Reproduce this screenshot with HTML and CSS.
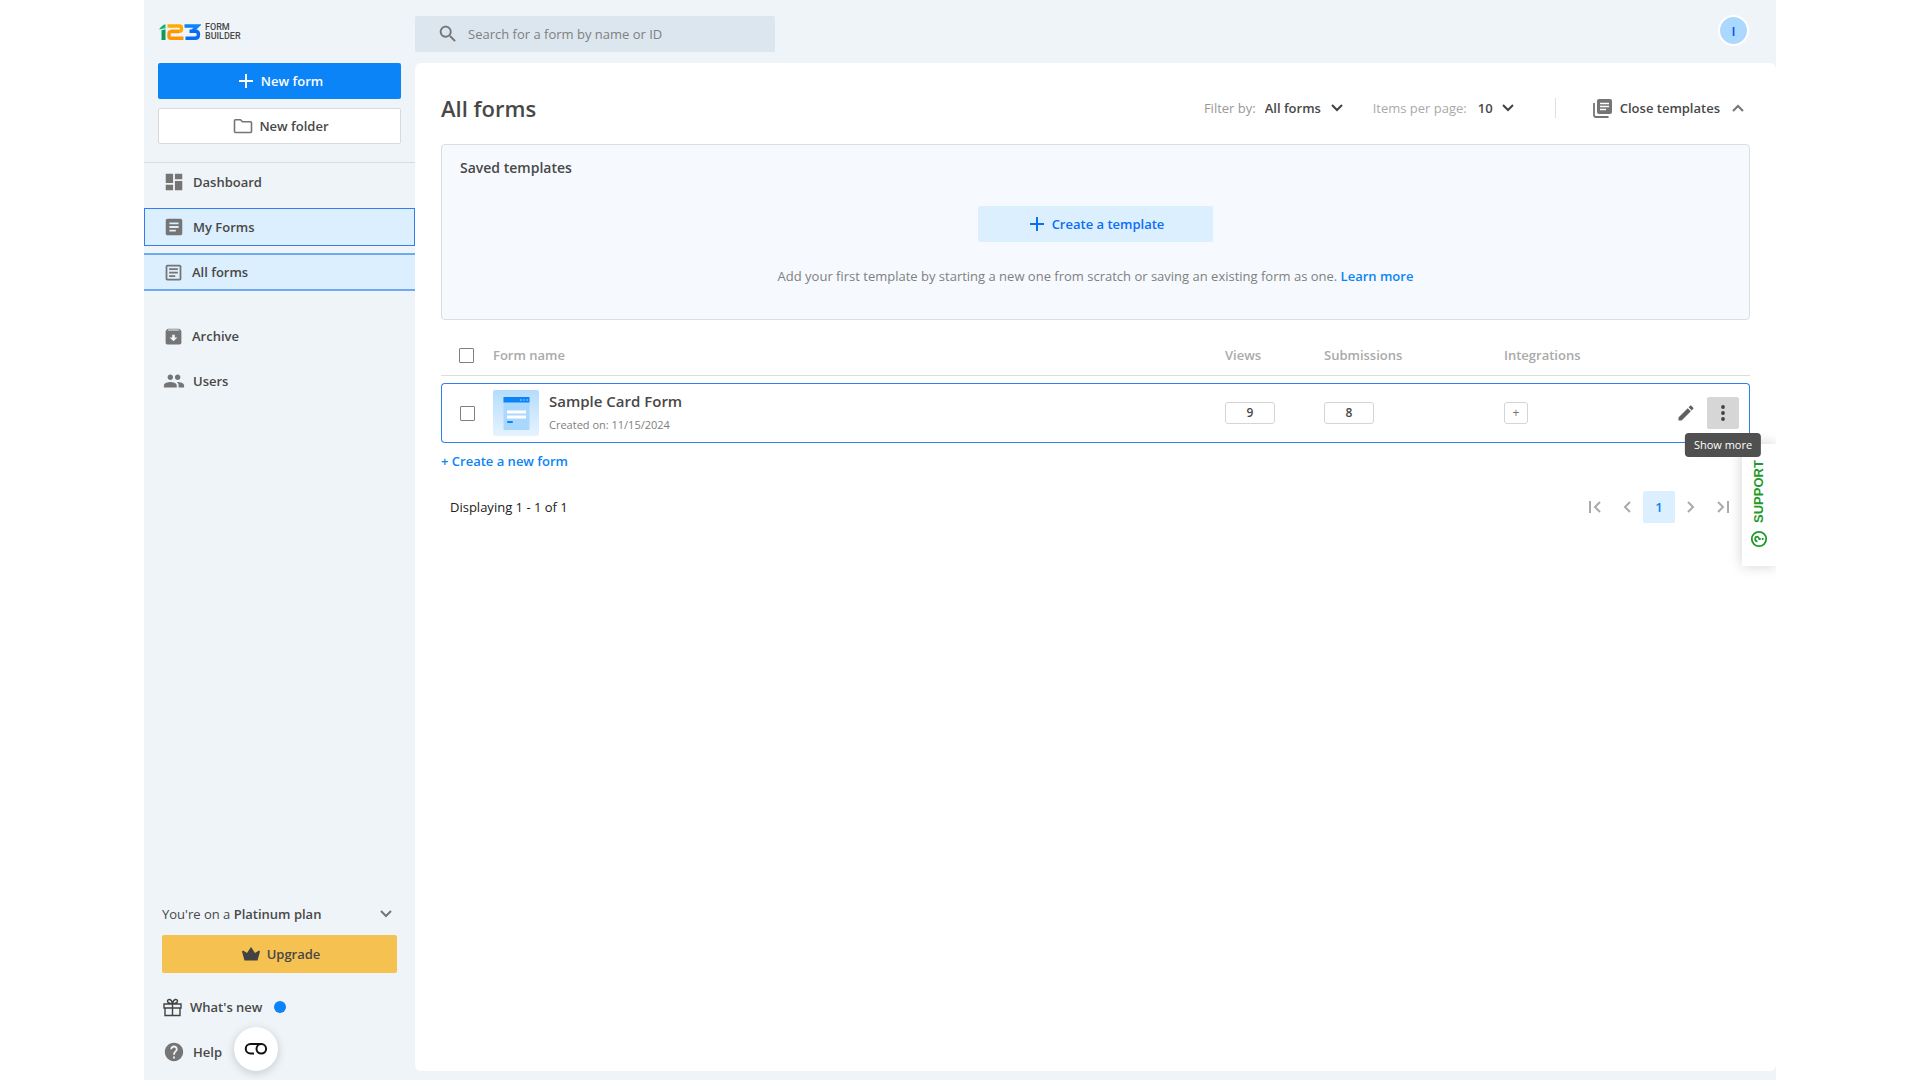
FILE: index.html
```html
<!DOCTYPE html>
<html lang="en">
<head>
    <meta charset="UTF-8">
    <meta name="viewport" content="width=device-width, initial-scale=1.0">
    <title>All forms - 123FormBuilder</title>
    <link rel="stylesheet" href="styles.css">
</head>
<body>
    <div class="app">
        <!-- Sidebar -->
        <aside class="sidebar">
            <a href="#" class="logo">
                <svg width="42" height="16" viewBox="0 0 42 16" fill="none">
                    <path d="M0 5.500C2 2.500 4 .8 6.500.3V4.200C4.500 4.400 2.500 5 0 5.500Z" fill="#12b76f"/>
                    <path d="M2.500 6.200L6.500 5.200V16H2.500Z" fill="#0f9a5c"/>
                    <path d="M8.500 2H20.500Q22.500 2 22.500 4V5Q22.500 7.200 20.500 7.200H11.500" stroke="#ffab00" stroke-width="3.400"/>
                    <path d="M20 7.600H12Q10 7.600 10 9.600V12.500Q10 14.300 12 14.300H24.500" stroke="#ff9500" stroke-width="3.400"/>
                    <path d="M25.500 2H38.500L33.500 7" stroke="#0b84f7" stroke-width="3.400"/>
                    <path d="M30.500 7.200H36.500Q39.500 7.200 39.500 10.500Q39.500 14.300 36 14.300H26.500" stroke="#0a6cf5" stroke-width="3.400"/>
                </svg>
                <span class="logo-text">FORM<br>BUILDER</span>
            </a>

            <div class="create-buttons">
                <button class="btn btn-primary">
                    <svg width="14" height="14" viewBox="0 0 14 14" stroke="currentColor" stroke-width="2"><path d="M7 0V14M0 7H14"/></svg>
                    New form
                </button>
                <button class="btn btn-outline">
                    <svg width="20" height="16" viewBox="0 0 20 16" fill="none" stroke="#757575" stroke-width="1.600"><path d="M2.500 1.800H7.500L9.500 3.800H17.500Q18.500 3.800 18.500 4.800V13.500Q18.500 14.500 17.500 14.500H2.500Q1.500 14.500 1.500 13.500V2.800Q1.500 1.800 2.500 1.800Z"/></svg>
                    New folder
                </button>
            </div>

            <nav class="menu">
                <a href="#" class="menu-item">
                    <svg width="22" height="22" viewBox="0 0 24 24"><path d="M3 13h8V3H3v10zm0 8h8v-6H3v6zm10 0h8V11h-8v10zm0-18v6h8V3h-8z"/></svg>
                    Dashboard
                </a>
                <a href="#" class="menu-item focused">
                    <svg width="22" height="22" viewBox="0 0 24 24"><path d="M19 3H5c-1.100 0-2 .9-2 2v14c0 1.100.9 2 2 2h14c1.100 0 2-.9 2-2V5c0-1.100-.9-2-2-2zm-5 14H7v-2h7v2zm3-4H7v-2h10v2zm0-4H7V7h10v2z"/></svg>
                    My Forms
                </a>
                <a href="#" class="menu-item selected">
                    <svg width="21" height="21" viewBox="0 0 24 24"><path d="M19 5v14H5V5h14m0-2H5c-1.100 0-2 .9-2 2v14c0 1.100.9 2 2 2h14c1.100 0 2-.9 2-2V5c0-1.100-.9-2-2-2zm-5 14H7v-2h7v2zm3-4H7v-2h10v2zm0-4H7V7h10v2z"/></svg>
                    All forms
                </a>
            </nav>
            <nav class="menu menu-second">
                <a href="#" class="menu-item">
                    <svg width="21" height="21" viewBox="0 0 24 24"><path d="M20.540 5.230l-1.390-1.680C18.880 3.210 18.470 3 18 3H6c-.47 0-.88.21-1.160.55L3.460 5.230C3.170 5.570 3 6.020 3 6.500V19c0 1.100.9 2 2 2h14c1.100 0 2-.9 2-2V6.500c0-.48-.17-.93-.46-1.270zM12 17.500L7.500 13H10.500v-3h3v3h3L12 17.500zM5.120 5l.81-1h12l.94 1H5.120z"/></svg>
                    Archive
                </a>
                <a href="#" class="menu-item">
                    <svg width="22" height="22" viewBox="0 0 24 24"><path d="M16 11c1.660 0 2.990-1.340 2.990-3S17.660 5 16 5s-3 1.340-3 3 1.340 3 3 3zm-8 0c1.660 0 2.990-1.340 2.990-3S9.660 5 8 5 5 6.340 5 8s1.340 3 3 3zm0 2c-2.330 0-7 1.170-7 3.500V19h14v-2.500c0-2.330-4.670-3.500-7-3.500zm8 0c-.29 0-.62.02-.97.05 1.160.84 1.970 1.970 1.970 3.450V19h6v-2.500c0-2.330-4.670-3.500-7-3.500z"/></svg>
                    Users
                </a>
            </nav>

            <div class="plan">
                <button class="plan-toggle">
                    <span>You're on a <strong>Platinum plan</strong></span>
                    <svg width="12" height="8" viewBox="0 0 12 8" fill="none" stroke="#757575" stroke-width="2"><path d="M1 1L6 6L11 1"/></svg>
                </button>
                <button class="btn btn-upgrade">
                    <svg width="18" height="14" viewBox="0 0 18 14" fill="#424242"><path d="M2.500 13.500L0 4.500L1 3.500L5 6L9 0L13 6L17 3.500L18 4.500L15.500 13.500Z"/></svg>
                    Upgrade
                </button>
            </div>
            <nav class="menu">
                <a href="#" class="menu-item">
                    <svg class="gift" width="19" height="19" viewBox="0 0 19 19" fill="none" stroke="#424242" stroke-width="1.400"><path d="M1 6H18V10H1ZM2 10V17.500H17V10M9.500 6V17.500M9.500 5.500C7 5.500 4.500 5 4.500 3C4.500 1 8.500.2 9.500 5.500C10.500.2 14.500 1 14.500 3C14.500 5 12 5.500 9.500 5.500Z"/></svg>
                    What's new
                    <span class="dot"></span>
                </a>
                <a href="#" class="menu-item">
                    <svg width="22" height="22" viewBox="0 0 24 24"><path d="M12 2C6.480 2 2 6.480 2 12s4.480 10 10 10 10-4.480 10-10S17.520 2 12 2zm1 17h-2v-2h2v2zm2.070-7.750l-.9.920C13.450 12.900 13 13.500 13 15h-2v-.5c0-1.100.45-2.100 1.170-2.830l1.240-1.260c.37-.36.59-.86.59-1.410 0-1.100-.9-2-2-2s-2 .9-2 2H8c0-2.210 1.790-4 4-4s4 1.790 4 4c0 .88-.36 1.680-.93 2.250z"/></svg>
                    Help
                </a>
            </nav>
            <button class="cookie-button" aria-label="Cookie settings">
                <svg width="24" height="14" viewBox="0 0 24 14" fill="none" stroke="#111" stroke-width="2"><path d="M10 11.500H6.500A4.700 4.700 0 0 1 6.500 2H17"/><circle cx="17.300" cy="6.800" r="4.800"/></svg>
            </button>
        </aside>

        <div class="content">
            <header class="topbar">
                <label class="search">
                    <svg width="22" height="22" viewBox="0 0 24 24" fill="#757575"><path d="M15.500 14h-.79l-.28-.27C15.410 12.590 16 11.110 16 9.500 16 5.910 13.090 3 9.500 3S3 5.910 3 9.500 5.910 16 9.500 16c1.610 0 3.090-.59 4.230-1.570l.27.28v.79l5 4.990L20.490 19l-4.990-5zm-6 0C7.010 14 5 11.990 5 9.500S7.010 5 9.500 5 14 7.010 14 9.500 11.990 14 9.500 14z"/></svg>
                    <input type="text" placeholder="Search for a form by name or ID" aria-label="Search for a form by name or ID">
                </label>
                <button class="avatar">I</button>
            </header>

            <main class="panel">
                <div class="toolbar">
                    <h1>All forms</h1>
                    <div class="filters">
                        <label class="filter" for="filter">Filter by:</label>
                        <span class="select-wrap">
                            <select id="filter"><option>All forms</option></select>
                            <svg width="12" height="8" viewBox="0 0 12 8" fill="none" stroke="#424242" stroke-width="2"><path d="M1 1L6 6L11 1"/></svg>
                        </span>
                        <label class="filter items" for="per-page">Items per page:</label>
                        <span class="select-wrap">
                            <select id="per-page"><option>10</option></select>
                            <svg width="12" height="8" viewBox="0 0 12 8" fill="none" stroke="#424242" stroke-width="2"><path d="M1 1L6 6L11 1"/></svg>
                        </span>
                    </div>
                    <button class="close-templates">
                        <svg width="19" height="19" viewBox="0 0 19 19"><path d="M6 0H17Q19 0 19 2V13Q19 15 17 15H6Q4 15 4 13V2Q4 0 6 0Z" fill="#757575"/><path d="M1 4V16Q1 18 3 18H15.500" fill="none" stroke="#757575" stroke-width="1.800"/><path d="M7 4.500H16M7 7.500H16M7 10.500H13" stroke="#fff" stroke-width="1.500"/></svg>
                        Close templates
                        <svg class="chevron-up" width="12" height="8" viewBox="0 0 12 8" fill="none" stroke="#757575" stroke-width="2"><path d="M1 7L6 2L11 7"/></svg>
                    </button>
                </div>

                <section class="templates">
                    <h2>Saved templates</h2>
                    <button class="btn btn-template">
                        <svg width="14" height="14" viewBox="0 0 14 14" stroke="currentColor" stroke-width="2"><path d="M7 0V14M0 7H14"/></svg>
                        Create a template
                    </button>
                    <p>Add your first template by starting a new one from scratch or saving an existing form as one. <a href="#">Learn more</a></p>
                </section>

                <table class="forms">
                    <thead>
                        <tr>
                            <th class="col-check"><input type="checkbox" aria-label="Select all forms"></th>
                            <th>Form name</th>
                            <th class="col-views">Views</th>
                            <th class="col-submissions">Submissions</th>
                            <th class="col-integrations">Integrations</th>
                            <th class="col-actions"></th>
                        </tr>
                    </thead>
                    <tbody>
                        <tr>
                            <td><input type="checkbox" aria-label="Select Sample Card Form"></td>
                            <td>
                                <div class="form-cell">
                                    <svg class="thumb" width="46" height="46" viewBox="0 0 46 46">
                                        <defs>
                                            <linearGradient id="thumb-bg" x1="0" y1="0" x2="0" y2="1">
                                                <stop offset="0" stop-color="#b5dcfd"/>
                                                <stop offset="1" stop-color="#e6f3fe"/>
                                            </linearGradient>
                                        </defs>
                                        <rect width="46" height="46" rx="2" fill="url(#thumb-bg)"/>
                                        <path d="M10.500 7H36.500V39Q36.500 40 35.500 40H11.500Q10.500 40 10.500 39Z" fill="#aad7fd"/>
                                        <path d="M10.500 7H36.500V12.500H10.500Z" fill="#0b84f7"/>
                                        <path d="M27 10H29M30.500 10H32M33.500 10H35" stroke="#aad7fd"/>
                                        <path d="M14 20.500H33V23.500H14ZM14 25.500H33V28.500H14Z" fill="#fff"/>
                                        <rect x="14" y="31" width="6" height="2" rx="1" fill="#0b84f7"/>
                                    </svg>
                                    <div>
                                        <div class="form-name">Sample Card Form</div>
                                        <div class="form-date">Created on: 11/15/2024</div>
                                    </div>
                                </div>
                            </td>
                            <td><a href="#" class="count">9</a></td>
                            <td><a href="#" class="count">8</a></td>
                            <td><button class="add-integration" aria-label="Add integration">+</button></td>
                            <td>
                                <div class="actions">
                                    <button class="icon-button" aria-label="Edit">
                                        <svg width="20" height="20" viewBox="0 0 24 24" fill="#616161"><path d="M3 17.250V21h3.750L17.810 9.940l-3.750-3.750L3 17.250zM20.710 7.040c.39-.39.39-1.020 0-1.410l-2.340-2.340c-.39-.39-1.020-.39-1.410 0l-1.830 1.830 3.750 3.750 1.830-1.830z"/></svg>
                                    </button>
                                    <button class="icon-button more" aria-label="Show more">
                                        <svg width="4" height="16" viewBox="0 0 4 16" fill="#424242"><circle cx="2" cy="2" r="1.900"/><circle cx="2" cy="8" r="1.900"/><circle cx="2" cy="14" r="1.900"/></svg>
                                        <span class="tooltip">Show more</span>
                                    </button>
                                </div>
                            </td>
                        </tr>
                    </tbody>
                </table>
                <a href="#" class="create-link">+ Create a new form</a>

                <div class="pager">
                    <span>Displaying 1 - 1 of 1</span>
                    <div class="pages">
                        <button aria-label="First page"><svg width="12" height="12" viewBox="0 0 12 12"><path d="M1 0V12M11 1L6 6L11 11"/></svg></button>
                        <button aria-label="Previous page"><svg width="8" height="12" viewBox="0 0 8 12"><path d="M7 1L2 6L7 11"/></svg></button>
                        <button class="current">1</button>
                        <button aria-label="Next page"><svg width="8" height="12" viewBox="0 0 8 12"><path d="M1 1L6 6L1 11"/></svg></button>
                        <button aria-label="Last page"><svg width="12" height="12" viewBox="0 0 12 12"><path d="M1 1L6 6L1 11M11 0V12"/></svg></button>
                    </div>
                </div>
            </main>
        </div>

        <button class="support">
            <svg width="18" height="18" viewBox="0 0 18 18" fill="none" stroke="#1f9a28" stroke-width="1.800"><circle cx="9" cy="9" r="7.200"/><path d="M6.700 7.500Q6.700 5.200 9 5.200Q11.300 5.200 11.300 7.200Q11.300 8.500 9 9.300V10.700M9 11.800V13.500"/></svg>
            SUPPORT
        </button>
    </div>
</body>
</html>
```
FILE: styles.css
```css
* {
    box-sizing: border-box;
}
body {
    margin: 0;
    background: #fff;
    font-family: 'Open Sans', 'Noto Sans', sans-serif;
    font-size: 13px;
    line-height: 20px;
    color: #484848;
}
button, input, select {
    font: inherit;
    color: inherit;
}
button {
    border: none;
    background: none;
    padding: 0;
    cursor: pointer;
}
a {
    color: #0b84f7;
    text-decoration: none;
    font-weight: 600;
}
.app {
    position: relative;
    display: flex;
    width: 85%;
    min-height: 100vh;
    margin: 0 auto;
    background: #eff4f9;
    overflow: hidden;
}

/* Sidebar */
.sidebar {
    position: relative;
    display: flex;
    flex-direction: column;
    flex: 0 0 271px;
    padding-bottom: 9px;
}
.logo {
    display: flex;
    align-items: center;
    gap: 4px;
    height: 63px;
    padding-left: 15px;
}
.logo-text {
    font: 500 9px/9px Roboto, sans-serif;
    color: #484848;
}
.create-buttons {
    display: flex;
    flex-direction: column;
    gap: 9px;
    padding: 0 14px 18px;
    border-bottom: 1px solid #d9dde1;
}
.btn {
    display: flex;
    align-items: center;
    justify-content: center;
    gap: 8px;
    height: 36px;
    padding-left: 3px;
    border-radius: 2px;
    font-weight: 600;
}
.btn-primary {
    background: #0b84f7;
    color: #fff;
}
.btn-outline {
    gap: 6px;
    background: #fff;
    border: 1px solid #d9d9d9;
}
.menu {
    display: flex;
    flex-direction: column;
    gap: 7px;
}
.menu-second {
    margin-top: 26px;
}
.menu-item {
    display: flex;
    align-items: center;
    gap: 8px;
    height: 38px;
    padding-left: 19px;
    color: #484848;
}
.menu-item svg {
    fill: #757575;
}
.menu-item .gift {
    fill: none;
}
.focused {
    background: #dceffe;
    outline: 1px solid #2f7ff0;
    outline-offset: -1px;
}
.selected {
    background: #dceffe;
    border: solid #6fa8f5;
    border-width: 2px 0;
}
.dot {
    width: 12px;
    height: 12px;
    margin-left: 4px;
    border-radius: 50%;
    background: #0b84f7;
}
.plan {
    display: flex;
    flex-direction: column;
    gap: 11px;
    margin-top: auto;
    padding: 0 18px 15px;
}
.plan-toggle {
    display: flex;
    align-items: center;
    justify-content: space-between;
    padding-right: 5px;
}
.plan-toggle strong {
    font-weight: 600;
}
.btn-upgrade {
    height: 38px;
    gap: 7px;
    background: #f5c150;
}
.cookie-button {
    position: absolute;
    left: 90px;
    bottom: 9px;
    display: grid;
    place-items: center;
    width: 44px;
    height: 44px;
    border-radius: 50%;
    background: #fff;
    box-shadow: 0 2px 10px rgba(0, 0, 0, 0.18);
}

/* Top bar */
.content {
    display: flex;
    flex-direction: column;
    flex: 1;
    min-width: 0;
    padding-bottom: 9px;
}
.topbar {
    display: flex;
    justify-content: space-between;
    align-items: center;
    height: 63px;
    padding-right: 27px;
}
.search {
    display: flex;
    align-items: center;
    gap: 7px;
    width: 360px;
    height: 36px;
    margin-top: 4px;
    padding-left: 22px;
    border-radius: 2px;
    background: #dce6ef;
}
.search input {
    flex: 1;
    border: none;
    outline: none;
    background: none;
}
.search input::placeholder {
    color: #808080;
}
.avatar {
    width: 31px;
    height: 31px;
    margin-bottom: 2px;
    border: 2px solid #fff;
    border-radius: 50%;
    background: #abd8ff;
    color: #0b50e8;
    font-weight: 600;
}

/* Main panel */
.panel {
    flex: 1;
    padding: 27px 26px;
    border-radius: 6px;
    background: #fff;
}
.toolbar {
    display: flex;
    align-items: center;
    height: 36px;
    margin-bottom: 18px;
}
h1 {
    margin: 0;
    font-size: 22px;
    font-weight: 600;
}
.filters {
    display: flex;
    align-items: center;
    margin-left: auto;
    padding-right: 41px;
    border-right: 1px solid #e0e0e0;
}
.filter {
    margin-right: 9px;
    color: #999;
}
.items {
    margin-left: 30px;
    margin-right: 11px;
    color: #aaa;
}
.select-wrap {
    display: flex;
    align-items: center;
    gap: 9px;
}
.select-wrap select {
    appearance: none;
    padding: 0;
    border: none;
    background: none;
    font-weight: 600;
}
.close-templates {
    display: flex;
    align-items: center;
    gap: 8px;
    margin-left: 37px;
    padding-right: 6px;
    font-weight: 600;
}
.chevron-up {
    margin-left: 4px;
}
.templates {
    display: flex;
    flex-direction: column;
    align-items: center;
    height: 176px;
    padding: 13px 18px;
    border: 1px solid #ddd;
    border-radius: 4px;
    background: #f6fafe;
}
.templates h2 {
    align-self: flex-start;
    margin: 0 0 28px;
    font-size: 14px;
    font-weight: 600;
}
.btn-template {
    width: 235px;
    background: #dceffe;
    color: #0b6ef5;
}
.templates p {
    margin: 24px 0 0;
    color: #808080;
}

/* Forms table */
.forms {
    width: 100%;
    margin-top: 15px;
    border-collapse: separate;
    border-spacing: 0;
    table-layout: fixed;
}
.forms th {
    height: 41px;
    padding: 0;
    border-bottom: 1px solid #ddd;
    text-align: left;
    font-weight: 600;
    color: #aaa;
}
.forms tbody::before {
    content: "";
    display: block;
    height: 7px;
}
.forms td {
    height: 60px;
    padding: 0;
    border: solid #2f80ee;
    border-width: 1px 0;
}
.forms td:first-child {
    border-left-width: 1px;
    border-radius: 4px 0 0 4px;
}
.forms td:last-child {
    border-right-width: 1px;
    border-radius: 0 4px 4px 0;
}
.forms input {
    appearance: none;
    display: block;
    width: 15px;
    height: 15px;
    margin: 0 0 0 18px;
    border: 1px solid #808080;
    border-radius: 1px;
    background: #fff;
}
.col-check {
    width: 52px;
}
.col-views {
    width: 99px;
}
.col-submissions {
    width: 180px;
}
.col-integrations {
    width: 119px;
}
.col-actions {
    width: 127px;
}
.form-cell {
    display: flex;
    align-items: center;
    gap: 10px;
}
.form-name {
    margin-bottom: 4px;
    font-size: 15px;
    font-weight: 600;
}
.form-date {
    font-size: 11px;
    color: #808080;
}
.count, .add-integration {
    display: flex;
    align-items: center;
    justify-content: center;
    width: 50px;
    height: 22px;
    border: 1px solid #d5d5d5;
    border-radius: 3px;
    background: #fff;
    color: #484848;
    font-size: 12px;
}
.add-integration {
    width: 24px;
    color: #757575;
}
.actions {
    display: flex;
    justify-content: flex-end;
    gap: 5px;
    padding-right: 10px;
}
.icon-button {
    position: relative;
    display: grid;
    place-items: center;
    width: 32px;
    height: 32px;
    border-radius: 2px;
}
.more {
    background: #d6d6d6;
}
.tooltip {
    position: absolute;
    top: 36px;
    left: 50%;
    z-index: 2;
    padding: 2px 9px;
    border-radius: 4px;
    background: #505050;
    color: #fff;
    font-size: 11px;
    white-space: nowrap;
    transform: translateX(-50%);
}
.create-link {
    display: block;
    margin-top: 8px;
}
.pager {
    display: flex;
    align-items: center;
    justify-content: space-between;
    margin-top: 20px;
    padding: 0 11px 0 9px;
    color: #212121;
}
.pages {
    display: flex;
}
.pages button {
    display: grid;
    place-items: center;
    width: 32px;
    height: 32px;
    border-radius: 2px;
}
.pages svg {
    fill: none;
    stroke: #aaa;
    stroke-width: 2;
}
.pages .current {
    background: #dceffe;
    color: #0b84f7;
    font-weight: 600;
}

/* Support tab on the right edge */
.support {
    position: absolute;
    top: 444px;
    right: 0;
    z-index: 1;
    display: flex;
    align-items: center;
    gap: 7px;
    width: 34px;
    height: 122px;
    padding-top: 18px;
    background: #fff;
    box-shadow: 0 0 14px rgba(0, 0, 0, 0.18);
    color: #1f9a28;
    font: bold 13px/18px 'Liberation Sans', Arial, sans-serif;
    writing-mode: vertical-rl;
    transform: rotate(180deg);
}
.support svg {
    transform: rotate(90deg);
}
```
